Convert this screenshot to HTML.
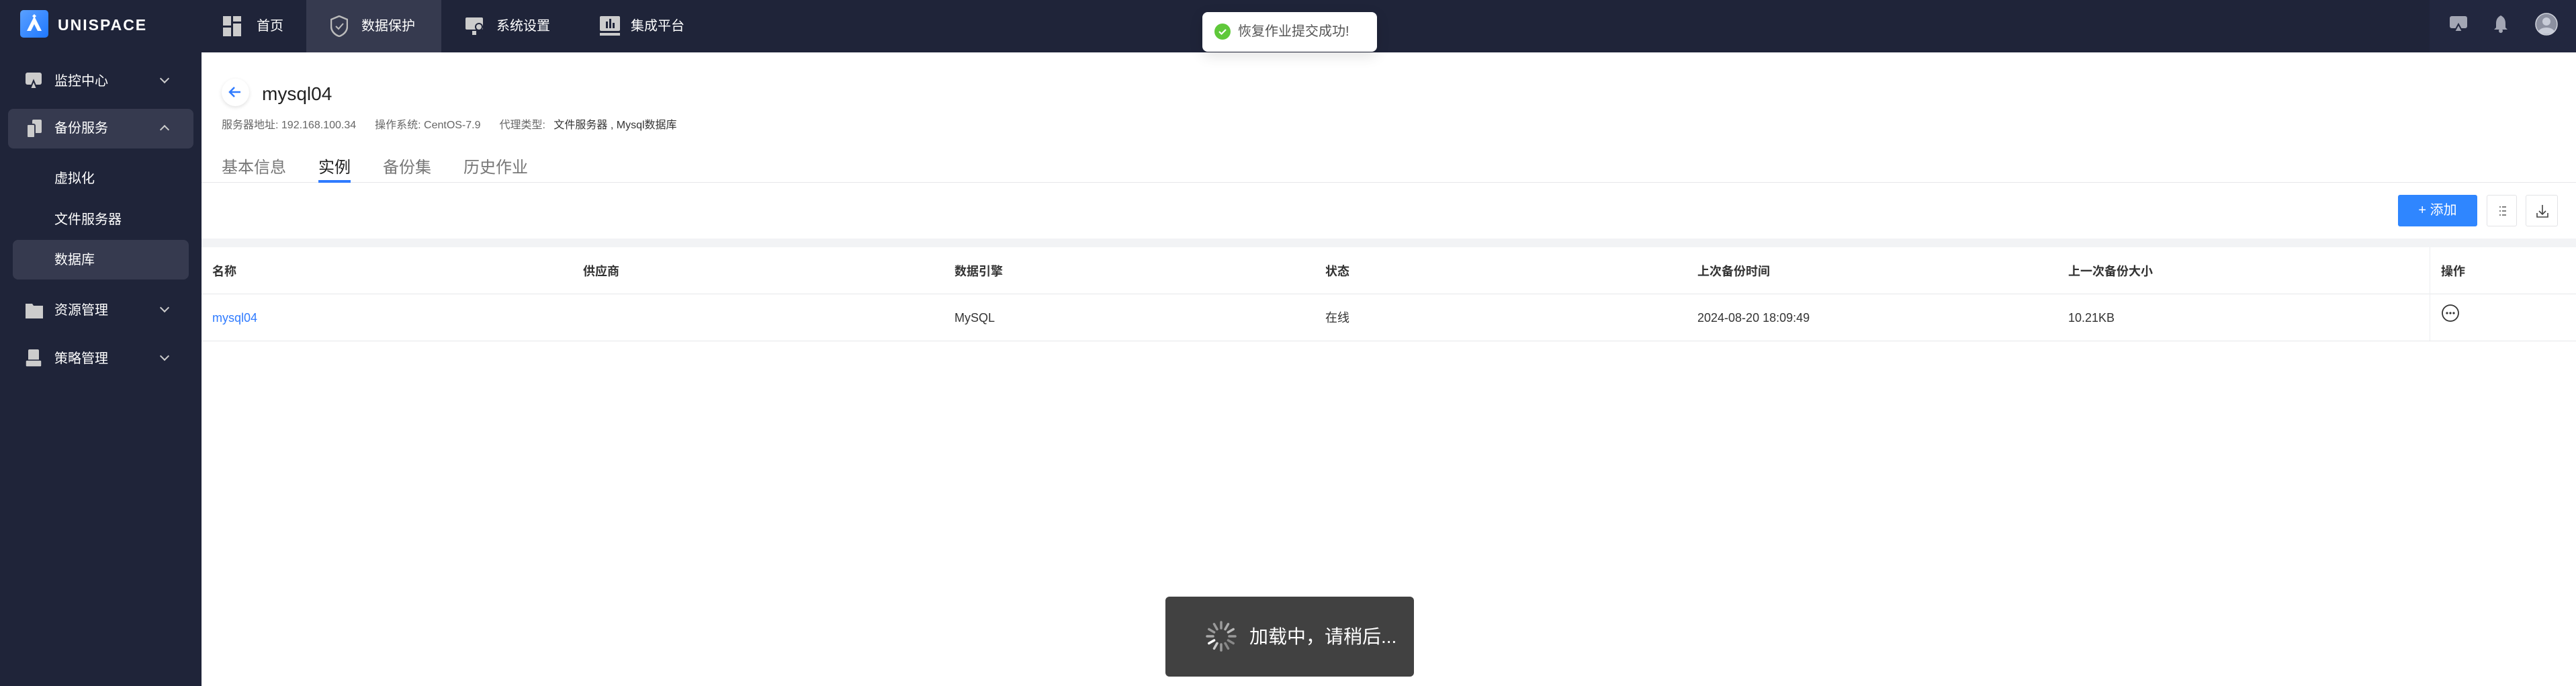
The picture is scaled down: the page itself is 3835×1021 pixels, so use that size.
<!DOCTYPE html>
<html><head><meta charset="utf-8"><style>
*{margin:0;padding:0;box-sizing:border-box}
body{width:3835px;height:1021px;overflow:hidden;background:#fff;font-family:"Liberation Sans","Noto Sans CJK SC",sans-serif;position:relative;line-height:1.2}
.abs{position:absolute}
#hdr{left:0;top:0;width:3835px;height:78px;background:#1f2439}
#side{left:0;top:78px;width:300px;height:943px;background:#1f2439}
.nav{top:0;height:78px;color:#fff;font-size:20px;display:flex;align-items:center}
.si{color:#fff;font-size:20px;position:absolute;left:81px;line-height:24px}
.chev{position:absolute;left:240px;width:10px;height:10px;border-right:2px solid #ccc;border-bottom:2px solid #ccc}
.th{position:absolute;top:392px;font-size:18px;line-height:24px;height:24px;font-weight:bold;color:#333}
.td{position:absolute;top:461px;font-size:18px;line-height:24px;height:24px;color:#333}
</style></head><body>
<div id="hdr" class="abs"></div>
<div class="abs" style="left:3617px;top:0;width:218px;height:78px;background:#22273f"></div>
<div class="abs" style="left:30px;top:15px;width:42px;height:41px;border-radius:5px;background:linear-gradient(135deg,#5aa0ff,#1f78ff)">
<svg width="42" height="41" viewBox="0 0 42 41"><path d="M21 9 L10 31 L16 31 L21 21 L26 31 L32 31 Z" fill="#fff"/><path d="M21 6l3 3-3 3-3-3z" fill="#fff"/></svg></div>
<div class="abs" style="left:86px;top:24px;color:#fff;font-size:23px;font-weight:bold;letter-spacing:2px">UNISPACE</div>
<div class="abs" style="left:456px;top:0;width:201px;height:78px;background:#363a4f"></div>
<div class="abs nav" style="left:332px"><svg width="28" height="30" style="margin-right:22px"><rect x="0" y="0" width="12" height="14" fill="#ccc"/><rect x="15" y="0" width="12" height="8" fill="#ccc"/><rect x="15" y="11" width="12" height="19" fill="#ccc"/><rect x="0" y="17" width="12" height="13" fill="#ccc"/></svg>首页</div>
<div class="abs nav" style="left:492px"><svg width="26" height="32" style="margin-right:20px"><path d="M13 1 L25 6 V16 C25 24 19 29 13 31 C7 29 1 24 1 16 V6 Z" fill="none" stroke="#bbb" stroke-width="2.5"/><path d="M8 16l4 4 7-8" fill="none" stroke="#bbb" stroke-width="2"/></svg>数据保护</div>
<div class="abs nav" style="left:693px"><svg width="30" height="30" style="margin-right:16px"><rect x="0" y="2" width="26" height="18" rx="2" fill="#ccc"/><circle cx="20" cy="16" r="6" fill="#1f2439"/><circle cx="20" cy="16" r="4" fill="#ccc"/><rect x="10" y="22" width="6" height="6" fill="#ccc"/></svg>系统设置</div>
<div class="abs nav" style="left:893px"><svg width="30" height="30" style="margin-right:16px"><rect x="0" y="0" width="30" height="22" rx="2" fill="#ccc"/><rect x="9" y="8" width="3" height="10" fill="#1f2439"/><rect x="14" y="4" width="3" height="14" fill="#1f2439"/><rect x="19" y="10" width="3" height="8" fill="#1f2439"/><rect x="0" y="25" width="30" height="4" fill="#ccc"/></svg>集成平台</div>
<svg class="abs" style="left:3647px;top:24px" width="30" height="24"><rect x="0" y="0" width="26" height="18" rx="3" fill="#a3a6b4"/><path d="M13 12 L19 23 H7Z" fill="#a3a6b4" stroke="#22273f" stroke-width="2"/></svg>
<svg class="abs" style="left:3711px;top:22px" width="24" height="28"><path d="M12 1 C6 4 5 9 5 13 V19 L2 22 H22 L19 19 V13 C19 9 18 4 12 1Z" fill="#a3a6b4"/><circle cx="12" cy="24" r="3" fill="#a3a6b4"/></svg>
<svg class="abs" style="left:3774px;top:19px" width="34" height="34"><circle cx="17" cy="17" r="16" fill="#8c90a0" stroke="#d0d3dc" stroke-width="1.5"/><circle cx="17" cy="13" r="6" fill="#c8ccd8"/><path d="M5 28 C8 20 26 20 29 28 C24 33 10 33 5 28Z" fill="#c8ccd8"/></svg>

<div id="side" class="abs"></div>
<svg class="abs" style="left:38px;top:108px" width="24" height="26"><rect x="0" y="0" width="24" height="18" rx="3" fill="#ccc"/><path d="M12 12 L17 24 H7Z" fill="#ccc" stroke="#1f2439" stroke-width="2"/></svg>
<div class="si" style="top:109px">监控中心</div><div class="chev" style="top:112px;transform:rotate(45deg)"></div>
<div class="abs" style="left:12px;top:162px;width:276px;height:59px;background:#363a4f;border-radius:8px"></div>
<svg class="abs" style="left:39px;top:178px" width="26" height="28"><rect x="9" y="0" width="14" height="20" rx="2" fill="#ccc"/><rect x="1" y="7" width="12" height="20" rx="2" fill="#ccc" stroke="#363a4f" stroke-width="2"/></svg>
<div class="si" style="top:179px">备份服务</div><div class="chev" style="top:188px;transform:rotate(-135deg)"></div>
<div class="si" style="top:254px">虚拟化</div>
<div class="si" style="top:315px">文件服务器</div>
<div class="abs" style="left:19px;top:357px;width:262px;height:59px;background:#363a4f;border-radius:8px"></div>
<div class="si" style="top:375px">数据库</div>
<svg class="abs" style="left:38px;top:448px" width="26" height="26"><path d="M0 4 H10 L12 7 H26 V26 H0Z" fill="#ccc"/></svg>
<div class="si" style="top:450px">资源管理</div><div class="chev" style="top:453px;transform:rotate(45deg)"></div>
<svg class="abs" style="left:38px;top:520px" width="26" height="28"><rect x="4" y="0" width="16" height="18" rx="2" fill="#ccc"/><rect x="0" y="16" width="24" height="10" rx="2" fill="#ccc" stroke="#1f2439" stroke-width="1.5"/></svg>
<div class="si" style="top:522px">策略管理</div><div class="chev" style="top:525px;transform:rotate(45deg)"></div>

<div class="abs" style="left:330px;top:117px;width:41px;height:41px;border-radius:50%;background:#fff;box-shadow:0 2px 6px rgba(0,0,0,.12)"></div>
<svg class="abs" style="left:338px;top:126px" width="24" height="22"><path d="M20 11 H4 M11 4 L4 11 L11 18" fill="none" stroke="#2f7bff" stroke-width="2.5"/></svg>
<div class="abs" style="left:390px;top:123px;font-size:28px;color:#222">mysql04</div>
<div class="abs" style="left:330px;top:177px;font-size:16px;color:#666;white-space:nowrap">服务器地址: 192.168.100.34<span style="margin-left:28px">操作系统: CentOS-7.9</span><span style="margin-left:28px">代理类型: </span><span style="color:#333;margin-left:8px">文件服务器 , Mysql数据库</span></div>
<div class="abs" style="left:330px;top:236px;font-size:24px;color:#777;white-space:nowrap">基本信息</div>
<div class="abs" style="left:474px;top:236px;font-size:24px;color:#222">实例</div>
<div class="abs" style="left:570px;top:236px;font-size:24px;color:#777">备份集</div>
<div class="abs" style="left:690px;top:236px;font-size:24px;color:#777">历史作业</div>
<div class="abs" style="left:300px;top:271px;width:3535px;height:1px;background:#e6e7ea"></div>
<div class="abs" style="left:474px;top:268px;width:48px;height:4px;background:#2f7bff"></div>

<div class="abs" style="left:3570px;top:290px;width:118px;height:47px;background:#2f86ff;border-radius:3px;color:#fff;font-size:20px;line-height:47px;text-align:center">+ 添加</div>
<div class="abs" style="left:3702px;top:290px;width:45px;height:47px;border:1px solid #e2e3e6;border-radius:3px"><svg width="45" height="47"><g stroke="#555" stroke-width="1.5"><line x1="18" y1="17" x2="20" y2="17"/><line x1="22" y1="17" x2="28" y2="17"/><line x1="18" y1="23" x2="20" y2="23"/><line x1="22" y1="23" x2="28" y2="23"/><line x1="18" y1="29" x2="20" y2="29"/><line x1="22" y1="29" x2="28" y2="29"/></g></svg></div>
<div class="abs" style="left:3760px;top:290px;width:48px;height:47px;border:1px solid #e2e3e6;border-radius:3px"><svg width="48" height="47"><g fill="none" stroke="#444" stroke-width="1.6"><path d="M24 14 V28 M19 23 L24 28 L29 23"/><path d="M16 26 V32 H32 V26"/></g></svg></div>

<div class="abs" style="left:300px;top:355px;width:3535px;height:13px;background:#f2f3f5"></div>
<div class="abs" style="left:300px;top:437px;width:3535px;height:1px;background:#e6e7ea"></div>
<div class="abs" style="left:300px;top:507px;width:3535px;height:1px;background:#e6e7ea"></div>
<div class="abs" style="left:3617px;top:368px;width:1px;height:139px;background:#eceef0"></div>
<div class="th" style="left:316px">名称</div>
<div class="th" style="left:868px">供应商</div>
<div class="th" style="left:1421px">数据引擎</div>
<div class="th" style="left:1973px">状态</div>
<div class="th" style="left:2527px">上次备份时间</div>
<div class="th" style="left:3079px">上一次备份大小</div>
<div class="th" style="left:3634px">操作</div>
<div class="td" style="left:316px;color:#2f7bff">mysql04</div>
<div class="td" style="left:1421px">MySQL</div>
<div class="td" style="left:1973px">在线</div>
<div class="td" style="left:2527px">2024-08-20 18:09:49</div>
<div class="td" style="left:3079px">10.21KB</div>
<svg class="abs" style="left:3634px;top:452px" width="28" height="28"><circle cx="14" cy="14" r="12" fill="none" stroke="#333" stroke-width="1.8"/><circle cx="9" cy="14" r="1.6" fill="#333"/><circle cx="14" cy="14" r="1.6" fill="#333"/><circle cx="19" cy="14" r="1.6" fill="#333"/></svg>

<div class="abs" style="left:1790px;top:18px;width:260px;height:59px;background:#fff;border-radius:8px;box-shadow:0 6px 20px rgba(0,0,0,.12)"></div>
<svg class="abs" style="left:1808px;top:35px" width="24" height="24"><circle cx="12" cy="12" r="12" fill="#5fc83a"/><path d="M7 12l3.5 3.5L17 9" fill="none" stroke="#fff" stroke-width="2.2"/></svg>
<div class="abs" style="left:1843px;top:35px;font-size:20px;color:#555">恢复作业提交成功!</div>

<div class="abs" style="left:1735px;top:888px;width:370px;height:119px;background:#414141;border-radius:6px"></div>
<svg class="abs" style="left:1794px;top:923px" width="48" height="48"><g stroke-width="3.5" stroke-linecap="round">
<line x1="24" y1="3" x2="24" y2="12" stroke="#999"/><line x1="34.5" y1="5.8" x2="30" y2="13.6" stroke="#aaa"/><line x1="42.2" y1="13.5" x2="34.4" y2="18" stroke="#bbb"/><line x1="45" y1="24" x2="36" y2="24" stroke="#999"/><line x1="42.2" y1="34.5" x2="34.4" y2="30" stroke="#888"/><line x1="34.5" y1="42.2" x2="30" y2="34.4" stroke="#888"/><line x1="24" y1="45" x2="24" y2="36" stroke="#999"/><line x1="13.5" y1="42.2" x2="18" y2="34.4" stroke="#ccc"/><line x1="5.8" y1="34.5" x2="13.6" y2="30" stroke="#fff"/><line x1="3" y1="24" x2="12" y2="24" stroke="#aaa"/><line x1="5.8" y1="13.5" x2="13.6" y2="18" stroke="#999"/><line x1="13.5" y1="5.8" x2="18" y2="13.6" stroke="#999"/></g></svg>
<div class="abs" style="left:1860px;top:931px;font-size:28px;color:#fff;white-space:nowrap">加载中，请稍后...</div>
</body></html>
